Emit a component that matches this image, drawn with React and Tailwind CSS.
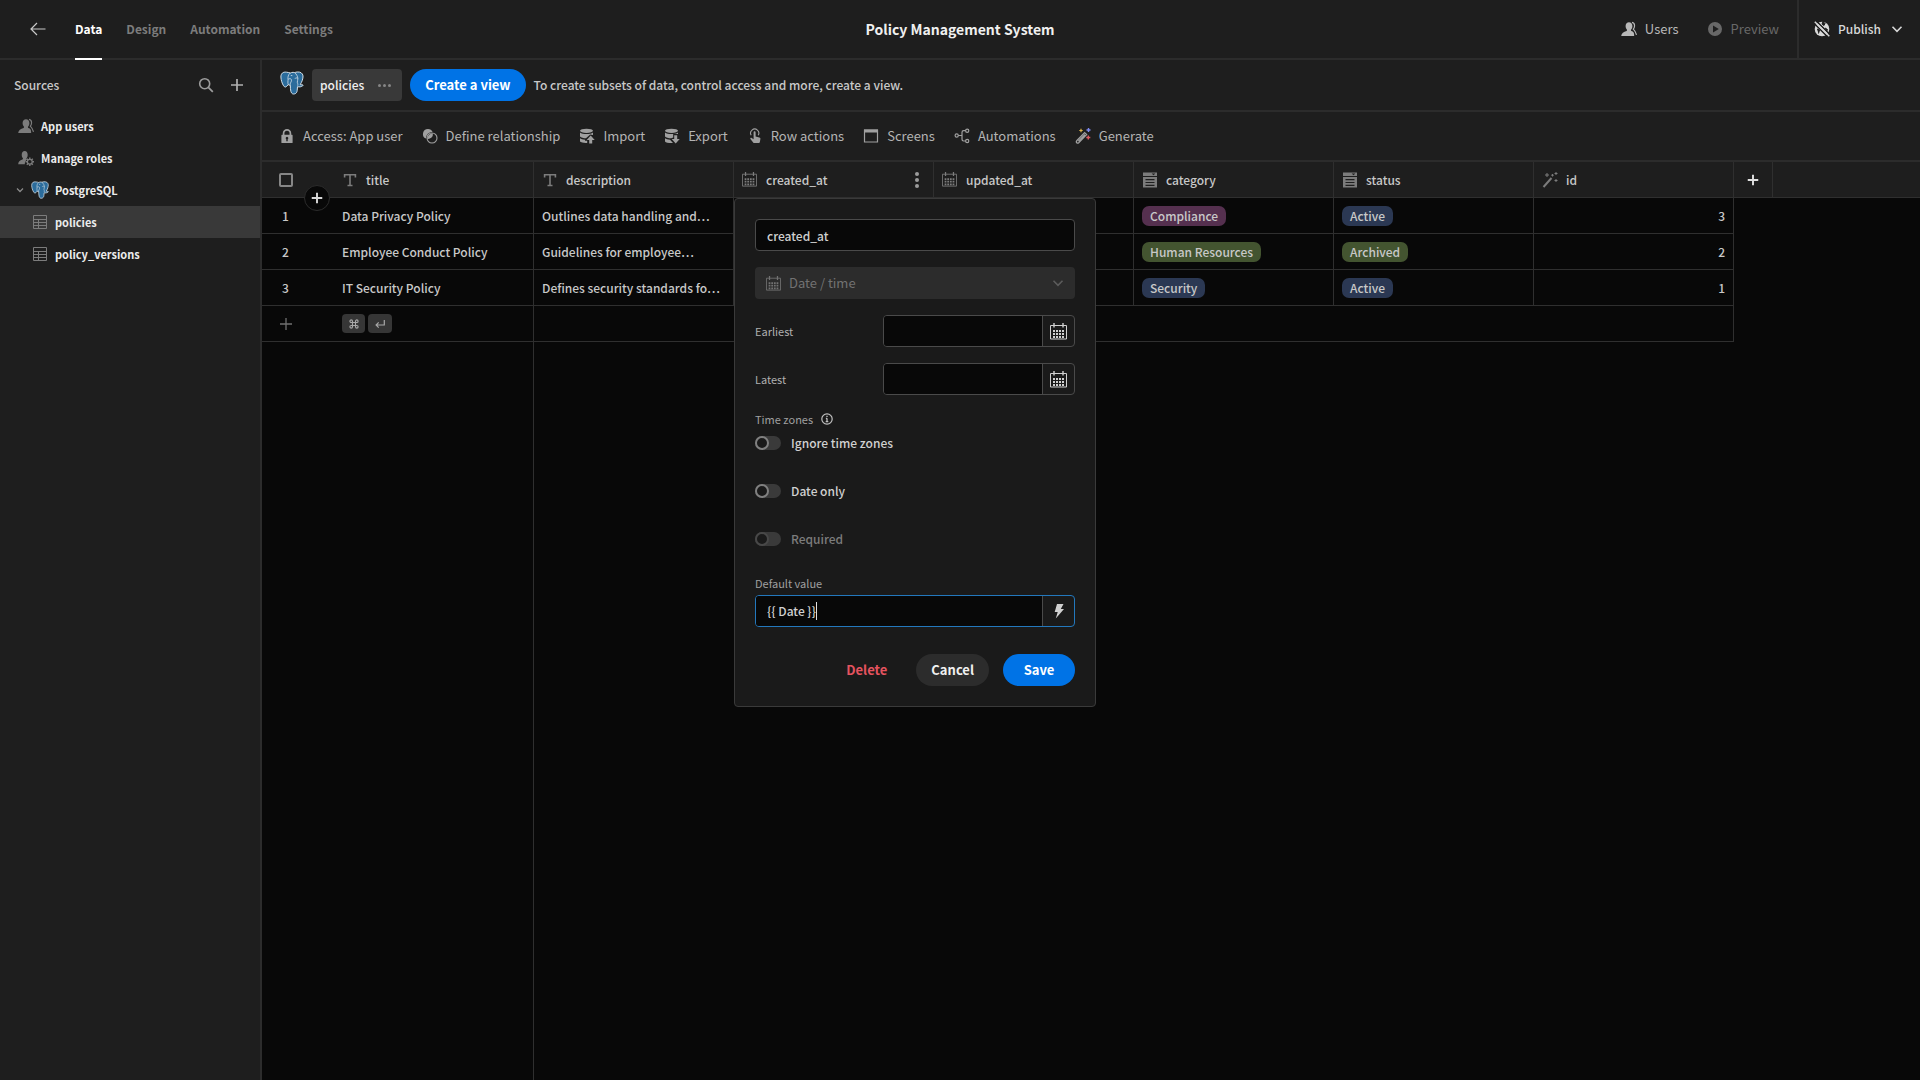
import React from "react";

function Svg({ size = 16, box = 16, className = "", children }) {
  return (
    <svg
      width={size}
      height={size}
      viewBox={`0 0 ${box} ${box}`}
      fill="none"
      stroke="currentColor"
      strokeWidth="1.2"
      className={`shrink-0 ${className}`}
      aria-hidden="true"
    >
      {children}
    </svg>
  );
}

function Elephant({ size, className }) {
  return (
    <Svg size={size} box={24} className={className}>
      <path
        d="M6.5 1.2C3 .6 .8 2.600.9 6c.1 3 1.2 6.500 2.700 8.800.9 1.400 2 1.600 2.900.7l1.700-1.900c.7.500 1.300.7 2.100.7.1 1.600 0 4.200.6 6.200.6 2.200 2 2.800 3.600 2.400 1.800-.4 2.500-1.700 2.700-3.500l.3-3.700c1.800.4 3.900.2 5.100-.8.9-.7.5-1.200-.5-1.100-.8.1-1.500.1-1.900-.2 1.700-2.600 3-6 2.800-8.700C22.700 2.100 20.300.7 17.200 1c-1.100.1-1.800.4-2.600.6-.9-.3-2-.4-3-.1-.5.1-.9.300-1.300.5-.9-.4-2.200-.6-3.800-.8Z"
        fill="#2b6c9c"
        stroke="#d5e0e8"
        strokeWidth="1"
      />
      <path
        d="M10.300 2c-2.300 1.700-2.500 4.200-2.300 6.500.1 1.700-.4 3.400.2 5.100M8.100 8.300c1.300-.9 2.600-.8 3.200.1.500 1.200-.2 2.600-.9 3.700-.4.800-.2 1.600-.1 2.200M14.600 1.600c1.900 1.500 3.100 3.700 3.300 6 .1 1.300-.7 2.300-.6 3.600.1 1.200.9 1.700.4 3.500M17.800 7.300c-1-.6-2.500-.5-2.900.4M10.800 4.500l1.500.1"
        stroke="#d5e0e8"
        strokeWidth="0.8"
      />
    </Svg>
  );
}

function Calendar({ size = 15 }) {
  return (
    <Svg size={size} box={17}>
      <path d="M.5 2.500h16v13.500H.5z" strokeWidth="1" />
      <path d="M4 0v4.500M13 0v4.500" strokeWidth="1.400" />
      <path d="M3 8h11M3 11h11M3 14h11" strokeWidth="2" strokeDasharray="2 1" />
    </Svg>
  );
}

const icons = {
  back: (
    <Svg box={16}>
      <path d="M15.500 8H1M7 2 1 8l6 6" />
    </Svg>
  ),
  users: (
    <Svg>
      <path
        d="M10.300 9.900c-.4-.2-.5-.9-.1-1.300.8-.9 1.200-2.100 1.200-3.600C11.400 2.600 9.900 1.200 8 1.200S4.600 2.600 4.600 5c0 1.500.5 2.700 1.200 3.600.4.4.3 1.100-.2 1.300C2.700 10.700.400 12 .2 15h13c-.1-2.900-.1-4.300-2.900-5.100Z"
        fill="currentColor"
        stroke="none"
      />
      <path d="M11 1.300c1.800.3 2.700 1.800 2.500 3.900-.1 1.400-.6 2.300-1.200 3 0 0 2.200 2.200 3.200 5.600" />
    </Svg>
  ),
  roles: (
    <Svg>
      <path
        d="M9.100 9.400c-.8-.2-.9-.7-.5-1.200.7-.9 1.100-2 1.100-3.300C9.700 2.500 8.500 1 6.700 1S3.700 2.500 3.700 4.900c0 1.300.4 2.400 1.100 3.300.4.500.3 1-.5 1.200C1.800 10.200.300 11.500.2 14.200h6.600c0-2.200.8-3.900 2.300-4.800Z"
        fill="currentColor"
        stroke="none"
      />
      <circle cx="11.800" cy="11.800" r="2.400" />
      <path
        d="M11.800 7.600v1.800M11.800 14.200V16M7.600 11.800h1.800M14.200 11.800H16M8.800 8.800l1.300 1.300M13.500 13.500l1.300 1.300M8.800 14.800l1.300-1.300M13.500 10.100l1.300-1.300"
        strokeWidth="1.400"
      />
    </Svg>
  ),
  grid: (
    <Svg>
      <path d="M1.500 1.500h13v13h-13zM1.500 5.500h13M1.500 8.500h13M1.500 11.500h13M6.500 5.500v9" strokeWidth="1" />
    </Svg>
  ),
  search: (
    <Svg>
      <circle cx="6.700" cy="6.700" r="5" strokeWidth="1.600" />
      <path d="m10.300 10.300 4.500 4.500" strokeWidth="1.800" />
    </Svg>
  ),
  plus: (
    <Svg>
      <path d="M8 2v12M2 8h12" strokeWidth="1.700" />
    </Svg>
  ),
  plusSmall: (
    <Svg size={14}>
      <path d="M8 2v12M2 8h12" strokeWidth="2.200" />
    </Svg>
  ),
  plusThin: (
    <Svg>
      <path d="M8 2v12M2 8h12" strokeWidth="1.300" />
    </Svg>
  ),
  chevron: (
    <Svg size={12} box={12}>
      <path d="M1.500 3.800 6 8.300l4.500-4.500" strokeWidth="1.600" />
    </Svg>
  ),
  chevronSmall: (
    <Svg size={8} box={12}>
      <path d="M1.500 3.800 6 8.300l4.500-4.500" strokeWidth="1.800" />
    </Svg>
  ),
  lock: (
    <Svg>
      <path d="M4.600 7V5.200a3.400 3.400 0 0 1 6.800 0V7" strokeWidth="1.700" />
      <path
        fillRule="evenodd"
        d="M3 6.800h10c.4 0 .6.200.6.600v7c0 .4-.2.600-.6.600H3c-.4 0-.6-.2-.6-.6v-7c0-.4.2-.6.600-.6Zm4.300 4.500v2h1.400v-2a1.300 1.300 0 1 0-1.400 0Z"
        fill="currentColor"
        stroke="none"
      />
    </Svg>
  ),
  relation: (
    <Svg>
      <circle cx="10" cy="10" r="5" strokeWidth="1.100" />
      <path
        d="M6 1a5 5 0 0 0-2 9.600A6.300 6.300 0 0 1 10.600 4 5 5 0 0 0 6 1Z"
        fill="currentColor"
        stroke="none"
      />
      <path d="M10.900 5.200a6 6 0 0 0-5.700 5.700 5 5 0 0 0 5.700-5.700Z" fill="currentColor" stroke="none" />
    </Svg>
  ),
  importDb: (
    <Svg>
      <g fill="currentColor" stroke="none">
        <ellipse cx="7.500" cy="2.800" rx="6.500" ry="2.100" />
        <path d="M1 4.500c1.200 1.200 4 1.600 6.500 1.600S12.800 5.700 14 4.500V7l-2.800-.6L7 10.300C4.500 10.200 2 9.600 1 8.500Z" />
        <path d="M1 10.200c1 .8 2.800 1.300 5 1.500v1.100h2.200v2.100C5 15.100 1.900 14.600 1 13.500Z" />
        <path d="m11.700 7.600 4 4.400h-2.500v3.600h-3V12H7.700Z" />
      </g>
    </Svg>
  ),
  exportDb: (
    <Svg>
      <g fill="currentColor" stroke="none">
        <ellipse cx="7.500" cy="2.800" rx="6.500" ry="2.100" />
        <path d="M1 4.500c1.200 1.200 4 1.600 6.500 1.600S12.800 5.700 14 4.500V6H9.200v3.500l-2 .8C4.500 10.200 2 9.600 1 8.500Z" />
        <path d="M1 10.200c1 .8 2.800 1.300 5 1.500L9 15c-4 .2-7.100-.4-8-1.500Z" />
        <path d="M10.200 7.300h3V11h2.500l-4 4.500-4-4.500h2.500Z" />
      </g>
    </Svg>
  ),
  tap: (
    <Svg>
      <path d="M4.200 7.300a4.100 4.100 0 1 1 7 0" strokeWidth="1.100" />
      <path
        d="M6.600 4.400c0-1.400 2-1.400 2 0v4l3.700 1c.9.200 1.200.9 1.100 1.700l-.6 3.100c-.1.500-.4.800-.9.800H7.200c-.5 0-.8-.2-1-.6L3.400 11c-.5-.9.5-1.700 1.300-1.100l1.900 1.400Z"
        fill="currentColor"
        stroke="none"
      />
    </Svg>
  ),
  screen: (
    <Svg>
      <path d="M1.500 2h13v12h-13z" />
      <path d="M1 1.500h14v3H1z" fill="currentColor" stroke="none" />
    </Svg>
  ),
  flow: (
    <Svg>
      <circle cx="2.700" cy="7.500" r="1.600" />
      <circle cx="13.200" cy="2.700" r="1.600" />
      <circle cx="13.200" cy="13" r="1.600" />
      <path d="M4.300 7.500H8M11.600 2.700h-2c-1.100 0-1.600.6-1.600 1.700v6.900c0 1.100.5 1.700 1.600 1.700h2" />
    </Svg>
  ),
  wandColor: (
    <Svg>
      <path d="m1.700 12.800 7.900-8.200 2 2-7.900 8.200c-1.400 1.100-3.100-.6-2-2ZM3.400 13.100l6.600-6.600" strokeWidth="1.300" />
      <path d="M6 .8v3.400M4.300 2.500h3.400" stroke="#e0b64a" strokeWidth="1.200" />
      <path d="M13.500 0v4M11.500 2h4" stroke="#7f8bf0" strokeWidth="1.400" />
      <path d="M13.300 7.500v4M11.300 9.500h4" stroke="#dc5a5f" strokeWidth="1.400" />
    </Svg>
  ),
  wand: (
    <Svg>
      <path d="M1.500 15 9.500 6" strokeWidth="2" />
      <path d="M5 1v4M3 3h4M10.500 2v2.500M9.200 3.200h2.600M14 0v3M12.500 1.500h3M14 7v3M12.500 8.500h3" strokeWidth="1" />
    </Svg>
  ),
  text: (
    <Svg>
      <path d="M2.600 5.500V2.800h10.800v2.700M8 2.800v11M5.500 13.500h5" strokeWidth="1.600" />
    </Svg>
  ),
  calendar: <Calendar />,
  options: (
    <Svg>
      <path d="M1 .5h14v3.500H1z" fill="currentColor" stroke="none" />
      <path d="M9.700 1.500h3.600L11.500 3.300Z" fill="#1e1e1e" stroke="none" />
      <path
        fillRule="evenodd"
        d="M1 5h14v10.500H1Zm2.500 2v1.200h9V7Zm0 2.900v1.200h9V9.900Zm0 2.800v1.200h9v-1.200Z"
        fill="currentColor"
        stroke="none"
      />
    </Svg>
  ),
  info: (
    <Svg size={12} box={12}>
      <circle cx="6" cy="6" r="5.200" />
      <path d="M6 5.200v3.600M4.900 5.400H6M4.700 8.700h2.600M6 2.700v1.300" strokeWidth="1.300" />
    </Svg>
  ),
  bolt: (
    <Svg>
      <path d="M6 1h6.500L9.800 6H13L4.800 15.500 6.700 9H3.700Z" fill="currentColor" stroke="none" />
    </Svg>
  ),
  play: (
    <Svg>
      <path
        fillRule="evenodd"
        d="M8 1a7 7 0 1 0 0 14A7 7 0 0 0 8 1ZM6 4.500v7L11.800 8Z"
        fill="currentColor"
        stroke="none"
      />
    </Svg>
  ),
  globeOff: (
    <Svg>
      <circle cx="8" cy="8" r="7.300" fill="currentColor" stroke="none" />
      <path d="M9 .5 8 3l2 1.500 1-2ZM3 8l2.500 1-1 3.500M11 7l2.500 1.500-1 2" stroke="#1e1e1e" strokeWidth="1" fill="#1e1e1e" />
      <path d="M0 2.200 14.500 16.700M2-.3 16.500 14" stroke="#1e1e1e" strokeWidth="1.500" />
      <path d="M.8.800 15.300 15.300" strokeWidth="1.500" />
    </Svg>
  ),
};

const tools = [
  ["lock", "Access: App user"],
  ["relation", "Define relationship"],
  ["importDb", "Import"],
  ["exportDb", "Export"],
  ["tap", "Row actions"],
  ["screen", "Screens"],
  ["flow", "Automations"],
  ["wandColor", "Generate"],
];

const columns = [
  ["text", "title"],
  ["text", "description"],
  ["calendar", "created_at"],
  ["calendar", "updated_at"],
  ["options", "category"],
  ["options", "status"],
  ["wand", "id"],
];

const pillColors = {
  Compliance: "bg-[#55304f]",
  "Human Resources": "bg-[#435430]",
  Security: "bg-[#2b3853]",
  Active: "bg-[#2b3853]",
  Archived: "bg-[#435430]",
};

const rows = [
  ["Data Privacy Policy", "Outlines data handling and…", "Compliance", "Active", 3],
  ["Employee Conduct Policy", "Guidelines for employee…", "Human Resources", "Archived", 2],
  ["IT Security Policy", "Defines security standards fo…", "Security", "Active", 1],
];

function Pill({ label }) {
  return (
    <span className={`inline-block h-5 rounded-[7px] px-2 align-middle leading-5 ${pillColors[label]}`}>{label}</span>
  );
}

function Header() {
  return (
    <header className="grid h-[60px] grid-cols-[1fr_auto_1fr] border-b-2 border-[#2c2c2c]">
      <div className="flex items-center pl-[30px]">
        <button type="button" aria-label="Back" className="mr-[29px] text-[#c8c8c8]">
          {icons.back}
        </button>
        <nav className="flex gap-6 self-stretch font-bold text-[#7c7c7c]">
          <a href="#data" className="-mb-0.5 flex items-center border-b-2 border-white text-white">
            Data
          </a>
          <a href="#design" className="flex items-center">Design</a>
          <a href="#automation" className="flex items-center">Automation</a>
          <a href="#settings" className="flex items-center">Settings</a>
        </nav>
      </div>
      <h1 className="self-center text-sm font-bold text-[#f0f0f0]">Policy Management System</h1>
      <div className="flex items-center justify-end">
        <button type="button" className="mr-7 flex items-center gap-2 text-[13px] font-normal text-[#b8b8b8]">
          {icons.users}
          Users
        </button>
        <button type="button" disabled className="mr-[18px] flex items-center gap-2 text-[13px] font-normal text-[#686868]">
          {icons.play}
          Preview
        </button>
        <button
          type="button"
          className="flex items-center gap-2 self-stretch border-l-2 border-[#2c2c2c] pr-[17px] pl-[15px] text-[#d8d8d8]"
        >
          {icons.globeOff}
          Publish
          <span className="ml-0.5">{icons.chevron}</span>
        </button>
      </div>
    </header>
  );
}

function Sidebar() {
  return (
    <aside className="w-[262px] shrink-0 border-r-2 border-[#2c2c2c]">
      <div className="flex h-[50px] items-center pr-[15px] pl-3.5 text-[#c8c8c8]">
        <h2 className="grow">Sources</h2>
        <button type="button" aria-label="Search" className="mr-[15px] text-[#9c9c9c]">
          {icons.search}
        </button>
        <button type="button" aria-label="Add source" className="text-[#b0b0b0]">
          {icons.plus}
        </button>
      </div>
      <nav className="text-[11px] font-bold text-[#ececec]">
        <a href="#users" className="flex h-8 items-center gap-[7px] pl-[18px]">
          <span className="text-[#7c7c7c]">{icons.users}</span>
          App users
        </a>
        <a href="#roles" className="flex h-8 items-center gap-[7px] pl-[18px]">
          <span className="text-[#7c7c7c]">{icons.roles}</span>
          Manage roles
        </a>
        <a href="#postgres" className="flex h-8 items-center pl-4">
          <span className="mr-[7px] text-[#8c8c8c]">{icons.chevronSmall}</span>
          <Elephant size={18} />
          <span className="ml-1.5">PostgreSQL</span>
        </a>
        <a href="#policies" aria-current="page" className="flex h-8 items-center gap-[7px] bg-[#393939] pl-8">
          <span className="text-[#7c7c7c]">{icons.grid}</span>
          policies
        </a>
        <a href="#versions" className="flex h-8 items-center gap-[7px] pl-8">
          <span className="text-[#7c7c7c]">{icons.grid}</span>
          policy_versions
        </a>
      </nav>
    </aside>
  );
}

function DateField({ id, label }) {
  return (
    <div className="mt-4 flex items-center justify-between">
      <label htmlFor={id} className="text-[11px] font-normal text-[#b0b0b0]">{label}</label>
      <div className="flex h-8 w-48 overflow-hidden rounded border border-[#4a4a4a]">
        <input id={id} type="text" className="min-w-0 grow bg-[#080808] px-3 outline-none" />
        <button
          type="button"
          aria-label={`Pick ${label.toLowerCase()} date`}
          className="flex w-8 shrink-0 items-center justify-center border-l border-[#4a4a4a] text-[#d0d0d0]"
        >
          <Calendar size={17} />
        </button>
      </div>
    </div>
  );
}

function Toggle({ label, disabled }) {
  return (
    <label className={`flex h-8 items-center gap-2.5 ${disabled ? "text-[#7c7c7c]" : "text-[#d0d0d0]"}`}>
      <input type="checkbox" role="switch" disabled={disabled} className="peer sr-only" />
      <span className="flex h-3.5 w-[26px] rounded-full bg-[#3a3a3a]">
        <span
          className={`size-3.5 rounded-full border-2 bg-[#1a1a1a] ${disabled ? "border-[#484848]" : "border-[#808080]"}`}
        />
      </span>
      {label}
    </label>
  );
}

function ColumnEditor() {
  return (
    <form
      className="absolute top-full left-0 z-10 mt-px w-[362px] rounded border border-[#3a3a3a] bg-[#1a1a1a] p-5 text-[#d0d0d0]"
      onSubmit={(e) => e.preventDefault()}
    >
      <input
        type="text"
        aria-label="Column name"
        defaultValue="created_at"
        className="block h-8 w-full rounded border border-[#4a4a4a] bg-[#080808] px-[11px] outline-none"
      />
      <div className="relative mt-4 flex h-8 items-center rounded bg-[#2c2c2c] text-[#727272]">
        <span className="absolute left-[11px]">{icons.calendar}</span>
        <select
          aria-label="Column type"
          disabled
          className="h-full w-full appearance-none bg-transparent pl-[34px] text-[13px] font-normal opacity-100"
        >
          <option>Date / time</option>
        </select>
        <span className="absolute right-[11px] text-[#5c5c5c]">{icons.chevron}</span>
      </div>
      <DateField id="earliest" label="Earliest" />
      <DateField id="latest" label="Latest" />
      <div className="mt-4 flex h-4 items-center gap-2 text-[11px] font-normal text-[#a0a0a0]">
        Time zones
        <span className="text-[#c0c0c0]">{icons.info}</span>
      </div>
      <div className="flex flex-col gap-4">
        <Toggle label="Ignore time zones" />
        <Toggle label="Date only" />
        <Toggle label="Required" disabled />
      </div>
      <label htmlFor="default-value" className="mt-5 mb-1 block text-[11px] leading-4 font-normal text-[#a0a0a0]">
        Default value
      </label>
      <div className="flex h-8 overflow-hidden rounded border border-[#2378bd]">
        <div className="flex min-w-0 grow items-center bg-[#080808] pl-[11px]">
          <input
            id="default-value"
            type="text"
            defaultValue="{{ Date }}"
            className="field-sizing-content bg-transparent outline-none"
          />
          <span className="h-[18px] w-px bg-[#e0e0e0]" />
        </div>
        <button
          type="button"
          aria-label="Edit binding"
          className="flex w-8 shrink-0 items-center justify-center border-l border-[#4a4a4a] text-[#d0d0d0]"
        >
          {icons.bolt}
        </button>
      </div>
      <div className="mt-[27px] flex justify-end text-[13px] font-bold">
        <button type="button" className="mr-3.5 h-8 px-[15px] text-[#e5535f]">Delete</button>
        <button type="button" className="mr-3.5 h-8 rounded-full bg-[#2c2c2c] px-[15px] text-[#f0f0f0]">Cancel</button>
        <button type="submit" className="h-8 w-[72px] rounded-full bg-[#0073e6] text-white">Save</button>
      </div>
    </form>
  );
}

function DataGrid() {
  const line = "border-[#2f2f2f]";
  return (
    <>
      <table className="w-full table-fixed border-separate border-spacing-0 text-left">
        <thead className="bg-[#1e1e1e] text-[#c8c8c8]">
          <tr>
            <th className={`relative h-9 w-[72px] border-b p-0 ${line}`}>
              <input
                type="checkbox"
                aria-label="Select all rows"
                className="ml-[17px] block size-3.5 appearance-none rounded-[2px] border-2 border-[#868686]"
              />
              <button
                type="button"
                aria-label="Insert row"
                className="absolute -bottom-3.5 left-[42px] z-10 flex size-[26px] items-center justify-center rounded-full border border-[#2c2c2c] bg-[#080808] text-[#d8d8d8]"
              >
                {icons.plusSmall}
              </button>
            </th>
            {columns.map(([icon, name]) => (
              <th key={name} className={`relative h-9 w-[200px] border-r border-b p-0 font-medium ${line}`}>
                <div className="flex items-center pl-2">
                  <span className="mr-2 w-4 text-[#7c7c7c]">{icons[icon]}</span>
                  <span className="grow">{name}</span>
                  {name === "created_at" && (
                    <button type="button" aria-label="Column options" className="mr-3.5 flex flex-col gap-0.5">
                      <span className="size-1 rounded-full bg-[#9c9c9c]" />
                      <span className="size-1 rounded-full bg-[#9c9c9c]" />
                      <span className="size-1 rounded-full bg-[#9c9c9c]" />
                    </button>
                  )}
                </div>
                {name === "created_at" && <ColumnEditor />}
              </th>
            ))}
            <th className={`h-9 w-[39px] border-r border-b p-0 ${line}`}>
              <button type="button" aria-label="Add column" className="mx-auto block text-[#e0e0e0]">
                {icons.plusSmall}
              </button>
            </th>
            <th className={`h-9 border-b p-0 ${line}`} />
          </tr>
        </thead>
        <tbody className="text-[#c8c8c8]">
          {rows.map(([title, description, category, status, id], i) => (
            <tr key={id}>
              <td className={`h-9 border-b p-0 pl-5 ${line}`}>{i + 1}</td>
              <td className={`h-9 border-r border-b p-0 pl-2 ${line}`}>{title}</td>
              <td className={`h-9 overflow-hidden border-r border-b p-0 pl-2 whitespace-nowrap ${line}`}>{description}</td>
              <td className={`h-9 border-r border-b p-0 ${line}`} />
              <td className={`h-9 border-r border-b p-0 ${line}`} />
              <td className={`h-9 border-r border-b p-0 pl-2 ${line}`}><Pill label={category} /></td>
              <td className={`h-9 border-r border-b p-0 pl-2 ${line}`}><Pill label={status} /></td>
              <td className={`h-9 border-r border-b p-0 pr-2 text-right ${line}`}>{id}</td>
            </tr>
          ))}
          <tr>
            <td className={`h-9 border-b p-0 pl-4 ${line}`}>
              <button type="button" aria-label="Add row" className="block text-[#707070]">{icons.plusThin}</button>
            </td>
            <td className={`h-9 border-r border-b p-0 pl-2 ${line}`}>
              <div className="flex gap-[3px] text-[#a8a8a8]">
                <kbd className="flex h-[19px] w-[23px] items-center justify-center rounded bg-[#363636]">
                  <Svg size={10} box={10}>
                    <path d="M3.500 3.500h3v3h-3zM3.500 3.500H2.200A1.300 1.300 0 1 1 3.500 2.200ZM6.500 3.500V2.200a1.300 1.300 0 1 1 1.300 1.300ZM6.500 6.500h1.300a1.300 1.300 0 1 1-1.300 1.300ZM3.500 6.500v1.300a1.300 1.300 0 1 1-1.300-1.300Z" strokeWidth="1.100" />
                  </Svg>
                </kbd>
                <kbd className="flex h-[19px] w-6 items-center justify-center rounded bg-[#363636]">
                  <Svg size={10} box={10}>
                    <path d="M9.300 1v5H1.200M3.700 3.400 1.100 6l2.600 2.600" />
                  </Svg>
                </kbd>
              </div>
            </td>
            <td colSpan={6} className={`h-9 border-r border-b p-0 ${line}`} />
          </tr>
        </tbody>
      </table>
      <div className={`w-[272px] grow border-r ${line}`} />
    </>
  );
}

export default function App() {
  return (
    <div className="flex min-h-screen flex-col bg-[#1e1e1e] font-['Noto_Sans_CJK_SC','Noto_Sans',sans-serif] text-xs leading-5 font-medium">
      <Header />
      <div className="flex grow">
        <Sidebar />
        <main className="flex min-w-0 grow flex-col bg-[#080808]">
          <div className="flex h-[52px] items-center border-b-2 border-[#2c2c2c] bg-[#1e1e1e] pl-[18px] text-[#c8c8c8]">
            <Elephant size={24} className="mb-1" />
            <button type="button" className="ml-2 flex h-8 items-center rounded bg-[#393939] px-2 text-[#f0f0f0]">
              policies
              <span className="mr-[3px] ml-3.5 flex gap-0.5">
                <span className="size-[3px] rounded-full bg-[#868686]" />
                <span className="size-[3px] rounded-full bg-[#868686]" />
                <span className="size-[3px] rounded-full bg-[#868686]" />
              </span>
            </button>
            <button type="button" className="mx-2 h-8 rounded-full bg-[#0073e6] px-[15px] text-[13px] font-bold text-white">
              Create a view
            </button>
            <p>To create subsets of data, control access and more, create a view.</p>
          </div>
          <div className="flex h-[50px] items-center gap-[19px] border-b-2 border-[#2c2c2c] bg-[#1e1e1e] pl-[17px] text-[13px] font-normal text-[#b4b4b4]">
            {tools.map(([icon, label]) => (
              <button key={label} type="button" className="flex items-center gap-2">
                <span className="text-[#a0a0a0]">{icons[icon]}</span>
                {label}
              </button>
            ))}
          </div>
          <DataGrid />
        </main>
      </div>
    </div>
  );
}
